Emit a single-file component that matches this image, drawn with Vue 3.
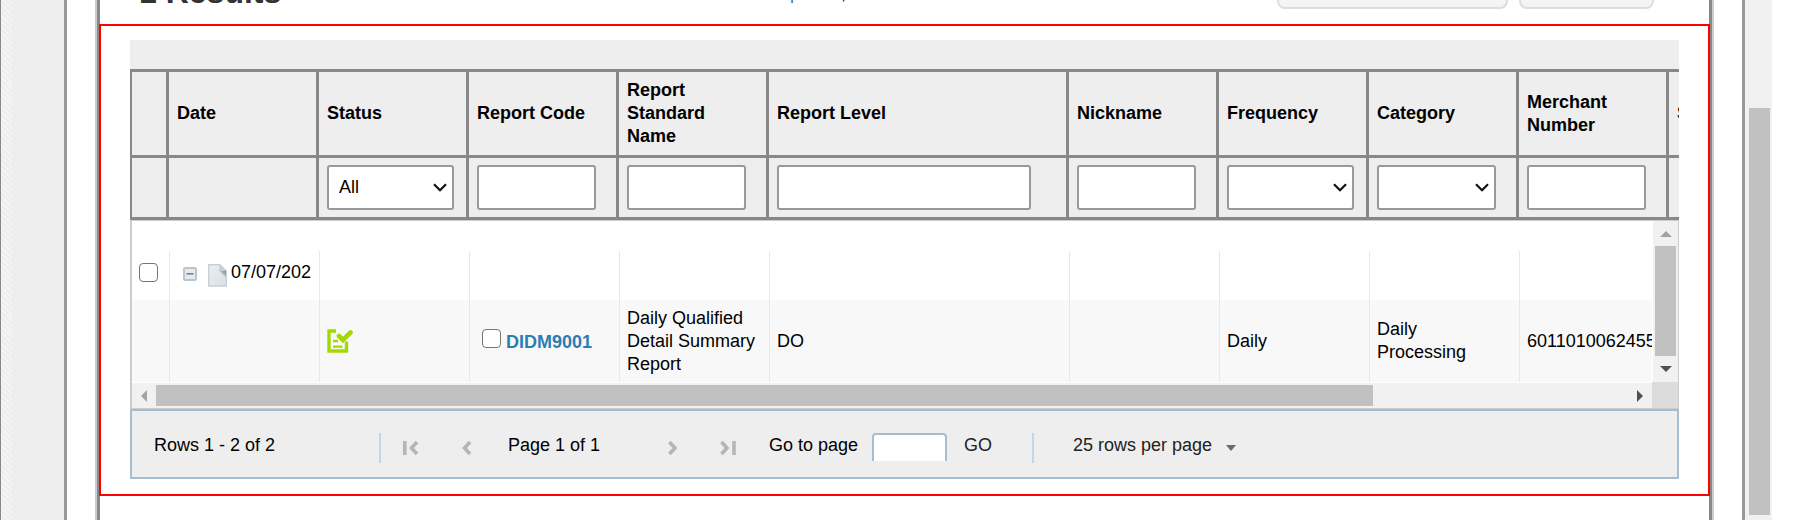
<script setup>
import { ref } from 'vue'

const columns = [
  { key: 'date', label: 'Date', filter: null },
  { key: 'status', label: 'Status', filter: 'select', options: ['All'] },
  { key: 'code', label: 'Report Code', filter: 'text' },
  { key: 'name', label: 'Report Standard Name', filter: 'text' },
  { key: 'level', label: 'Report Level', filter: 'text', wide: true },
  { key: 'nickname', label: 'Nickname', filter: 'text' },
  { key: 'frequency', label: 'Frequency', filter: 'select', options: [''] },
  { key: 'category', label: 'Category', filter: 'select', options: [''], narrow: true },
  { key: 'merchant', label: 'Merchant Number', filter: 'text' },
  { key: 'store', label: 'Store', filter: null },
]
const goTo = ref('')
</script>

<template>
  <div class="page">
    <div class="gutter"></div>
    <div class="outer">
      <main class="frame">
        <header class="top">
          <h1>1 Results</h1>
          <p class="help"><a href="#">Help</a> here,</p>
          <div class="actions">
            <button type="button" class="action wide" aria-label="Download"></button>
            <button type="button" class="action" aria-label="Print"></button>
          </div>
        </header>

        <section class="panel">
          <div class="bar"></div>
          <div class="head">
            <table class="head-table">
              <colgroup>
                <col class="c-pick" />
                <col v-for="c in columns" :key="c.key" :class="c.wide ? 'c-wide' : 'c-std'" />
              </colgroup>
              <thead>
                <tr class="labels">
                  <td></td>
                  <th v-for="c in columns" :key="c.key" scope="col">{{ c.label }}</th>
                </tr>
                <tr class="filters">
                  <td></td>
                  <td v-for="c in columns" :key="c.key">
                    <div v-if="c.filter === 'select'" class="pick" :class="{ narrow: c.narrow }">
                      <select :aria-label="c.label">
                        <option v-for="o in c.options" :key="o">{{ o }}</option>
                      </select>
                      <svg class="chevron" width="14" height="9" viewBox="0 0 14 9" aria-hidden="true">
                        <path d="M1 1.2 L7 7.2 L13 1.2" fill="none" stroke="#111" stroke-width="2.2" />
                      </svg>
                    </div>
                    <input v-else-if="c.filter === 'text'" type="text" :class="{ long: c.wide }" :aria-label="c.label" />
                  </td>
                </tr>
              </thead>
            </table>
          </div>

          <div class="body">
            <div class="viewport">
              <table class="body-table">
                <colgroup>
                  <col class="b-pick" />
                  <col v-for="c in columns" :key="c.key" :class="c.wide ? 'c-wide' : 'c-std'" />
                </colgroup>
                <tbody>
                  <tr class="group">
                    <td class="check"><input type="checkbox" aria-label="Select 07/07/202" /></td>
                    <td>
                      <div class="date">
                        <button type="button" class="toggle" aria-label="Collapse">
                          <svg width="14" height="14" viewBox="0 0 14 14">
                            <rect x="1" y="1" width="12" height="12" rx="1" fill="#e6eaee" stroke="#bcc5cc" stroke-width="2" />
                            <path d="M3.5 6.8 H10.5" stroke="#71838f" stroke-width="1.6" />
                          </svg>
                        </button>
                        <svg class="doc" width="19" height="23" viewBox="0 0 19 23" aria-hidden="true">
                          <defs>
                            <linearGradient id="sheet" x1="0" y1="0" x2="1" y2="1">
                              <stop offset="0" stop-color="#eceff2" />
                              <stop offset="1" stop-color="#d9dfe4" />
                            </linearGradient>
                            <linearGradient id="fold" x1="1" y1="0" x2="0" y2="1">
                              <stop offset=".2" stop-color="#8799a6" />
                              <stop offset=".6" stop-color="#dce2e7" />
                            </linearGradient>
                          </defs>
                          <path d="M.7 .7 H12 L18.3 7 V22 H.7 Z" fill="url(#sheet)" stroke="#c8d0d7" stroke-width="1.4" />
                          <path d="M10 6 H18 V14 Z" fill="url(#fold)" />
                          <path d="M11.5 1 L18 7 H11.5 Z" fill="#c3cdd4" />
                        </svg>
                        <span>07/07/202</span>
                      </div>
                    </td>
                    <td v-for="n in 9" :key="n"></td>
                  </tr>
                  <tr class="item">
                    <td></td>
                    <td></td>
                    <td>
                      <svg class="ready" width="26" height="24" viewBox="0 0 26 24" role="img" aria-label="Ready">
                        <g fill="none" stroke="#a4d900">
                          <path d="M9 2 H2 V22 H19.5 V12.5" stroke-width="3.4" />
                          <path d="M6 12 H11 M6 17.6 H15.5" stroke-width="2.4" />
                          <path d="M12 7 L16 11 L23.5 3.5" stroke-width="4.6" stroke-linecap="round" />
                        </g>
                      </svg>
                    </td>
                    <td class="code">
                      <div>
                        <input type="checkbox" aria-label="DIDM9001" />
                        <a href="#">DIDM9001</a>
                      </div>
                    </td>
                    <td>Daily Qualified Detail Summary Report</td>
                    <td>DO</td>
                    <td></td>
                    <td>Daily</td>
                    <td>Daily Processing</td>
                    <td class="number">601101006245555</td>
                    <td></td>
                  </tr>
                </tbody>
              </table>
            </div>
            <div class="vscroll" aria-hidden="true">
              <svg width="12" height="6" viewBox="0 0 12 6"><path d="M0 6 L6 0 L12 6 Z" fill="#a3a3a3" /></svg>
              <div class="thumb"></div>
              <svg width="12" height="6" viewBox="0 0 12 6"><path d="M0 0 L6 6 L12 0 Z" fill="#505050" /></svg>
            </div>
            <div class="hscroll" aria-hidden="true">
              <svg width="6" height="12" viewBox="0 0 6 12"><path d="M6 0 L0 6 L6 12 Z" fill="#a3a3a3" /></svg>
              <div class="thumb"></div>
              <div></div>
              <svg width="6" height="12" viewBox="0 0 6 12"><path d="M0 0 L6 6 L0 12 Z" fill="#505050" /></svg>
            </div>
            <div class="corner"></div>
          </div>

          <footer class="pager">
            <span>Rows 1 - 2 of 2</span>
            <i class="rule"></i>
            <button type="button" aria-label="First page">
              <svg width="16" height="14" viewBox="0 0 16 14"><path d="M1.8 0 V14 M14 1 L8.5 7 L14 13" /></svg>
            </button>
            <button type="button" aria-label="Previous page">
              <svg width="10" height="14" viewBox="0 0 10 14"><path d="M8 1 L2.5 7 L8 13" /></svg>
            </button>
            <span>Page 1 of 1</span>
            <button type="button" aria-label="Next page">
              <svg width="10" height="14" viewBox="0 0 10 14"><path d="M1.5 1 L7 7 L1.5 13" /></svg>
            </button>
            <button type="button" aria-label="Last page">
              <svg width="16" height="14" viewBox="0 0 16 14"><path d="M14 0 V14 M1.5 1 L7 7 L1.5 13" /></svg>
            </button>
            <label for="goto">Go to page</label>
            <input id="goto" v-model="goTo" type="text" />
            <button type="button" class="go">GO</button>
            <i class="rule"></i>
            <div class="size">
              <select aria-label="Rows per page"><option>25 rows per page</option></select>
              <svg width="10" height="6" viewBox="0 0 10 6" aria-hidden="true"><path d="M0 0 H10 L5 6 Z" fill="#5f6e7a" /></svg>
            </div>
          </footer>
        </section>
      </main>
    </div>
    <div class="page-scroll" aria-hidden="true"><div class="thumb"></div></div>
    <div class="margin"></div>
  </div>
</template>

<style>
body {
  background: #fff;
}
</style>

<style scoped>
* {
  box-sizing: border-box;
}
.page {
  display: flex;
  min-height: 100vh;
  font: 18px/23px "Liberation Sans", Arial, sans-serif;
  color: #000;
}
input,
select,
button {
  font: inherit;
  color: inherit;
  margin: 0;
}
button {
  padding: 0;
  border: 0;
  background: none;
  cursor: pointer;
}
a {
  color: #2a7db5;
  text-decoration: none;
}
svg {
  display: block;
}
.gutter {
  flex: none;
  width: 64px;
  border-left: 1px solid #888;
  background:
    repeating-linear-gradient(45deg, #f4f4f4 0 2px, #eee 2px 4px) 0 0 / 11px 100% no-repeat,
    #eee;
}
.outer {
  flex: 1;
  min-width: 0;
  display: flex;
  padding: 0 30px;
  border: solid #999;
  border-width: 0 3px;
  background: #fff;
}
.frame {
  flex: 1;
  min-width: 0;
  border: solid #888;
  border-width: 0 3px;
  box-shadow: 0 0 0 2px #ccc;
}
.top {
  display: flex;
  align-items: flex-end;
  height: 24px;
  overflow: hidden;
  padding: 0 55px 0 39px;
}
h1 {
  flex: none;
  width: 624px;
  margin: 0 0 16px;
  font-size: 32px;
  line-height: 32px;
  color: #333;
}
.help {
  margin: 0 0 19px;
}
.actions {
  display: flex;
  gap: 11px;
  margin: 0 0 15px auto;
}
.action {
  width: 135px;
  height: 40px;
  border: 2px solid #ddd;
  border-radius: 8px;
  background: linear-gradient(#fff, #f3f3f3);
}
.action.wide {
  width: 231px;
}
.panel {
  margin: 0 -1px;
  padding: 14px 29px 15px;
  border: 2px solid #f00;
  background: #fff;
}
.bar {
  height: 29px;
  background: #eee;
}
.head {
  overflow: hidden;
  border-top: 3px solid #888;
  border-bottom: 1px solid #ccc;
  background: #eee;
}
table {
  table-layout: fixed;
  border-collapse: separate;
  border-spacing: 0;
}
.head-table {
  width: 1689px;
}
.body-table {
  width: 1687px;
  margin-top: 30px;
}
.c-pick {
  width: 39px;
}
.b-pick {
  width: 37px;
}
.c-std {
  width: 150px;
}
.c-wide {
  width: 300px;
}
.head-table th,
.head-table td {
  padding: 0 12px 0 8px;
  border: solid #888;
  border-width: 0 3px 3px 0;
  text-align: left;
}
.head-table tr > :first-child {
  border-left-width: 2px;
}
.labels {
  height: 86px;
}
.filters {
  height: 62px;
}
.filters input {
  display: block;
  width: 119px;
}
.filters input.long {
  width: 254px;
}
.filters input,
.filters select {
  height: 45px;
  padding: 0 10px;
  border: 2px solid #999;
  border-radius: 3px;
  background: #fff;
}
.pick {
  position: relative;
  width: 127px;
}
.pick.narrow {
  width: 119px;
}
.pick select {
  display: block;
  width: 100%;
  appearance: none;
}
.chevron {
  position: absolute;
  right: 7px;
  top: 18px;
  pointer-events: none;
}
.body {
  display: grid;
  grid-template-columns: minmax(0, 1fr) 26px;
  grid-template-rows: auto 26px;
  border: solid #ccc;
  border-width: 0 1px 1px 2px;
}
.viewport {
  overflow: hidden;
}
.body-table td {
  padding: 0 12px 0 7px;
  border-left: 1px solid #e8e8e8;
}
.body-table td:first-child {
  border-left: 0;
}
.group {
  height: 49px;
}
.item {
  height: 82px;
  background: #f8f8f8;
}
input[type="checkbox"] {
  flex: none;
  display: block;
  appearance: none;
  width: 19px;
  height: 19px;
  border: 1px solid #767676;
  border-radius: 4px;
  background: #fff;
}
input[type="checkbox"]:checked {
  background: #2a7db5;
}
.group td {
  padding-bottom: 6px;
}
.date {
  display: flex;
  align-items: center;
  padding-left: 6px;
}
.doc {
  flex: none;
  margin: 6px 4px 0 11px;
}
.toggle {
  margin-top: 2px;
}
.code div {
  display: flex;
  align-items: flex-start;
  gap: 5px;
  padding-left: 5px;
  font-weight: bold;
}
.code a {
  padding-top: 2px;
}
.number {
  white-space: nowrap;
}
.thumb {
  background: #c1c1c1;
}
.vscroll {
  display: grid;
  grid-template-rows: 25px 1fr 26px;
  align-items: center;
  padding: 0 2px 0 2px;
  border-left: 1px solid #fff;
  background: #f1f1f1;
}
.vscroll svg,
.hscroll svg {
  justify-self: center;
}
.vscroll .thumb {
  align-self: stretch;
}
.hscroll {
  display: grid;
  grid-template-columns: 24px 1217fr 255fr 24px;
  align-items: center;
  border-top: 1px solid #fff;
  background: #f1f1f1;
}
.hscroll .thumb {
  height: 21px;
}
.corner {
  background: #dcdcdc;
}
.pager {
  display: grid;
  grid-template-columns: 225px 24px 59px 46px 160px 52px 49px 103px 92px 68px 41px 1fr;
  align-items: start;
  justify-items: start;
  height: 70px;
  padding: 22px 0 0 22px;
  border: 2px solid #a3bdd3;
  background: #eee;
  line-height: 24px;
}
.rule {
  width: 2px;
  height: 30px;
  background: #bdd7ec;
}
.pager button {
  height: 30px;
}
.pager button path {
  fill: none;
  stroke: #b5b5b5;
  stroke-width: 3.6;
}
.pager input {
  width: 75px;
  height: 28px;
  padding: 0 8px;
  border: 2px solid #a3bdd3;
  border-bottom: 0;
  border-radius: 4px 4px 0 0;
  background: #fff;
}
.pager .go {
  height: 24px;
  color: #222;
}
.size {
  display: flex;
  align-items: center;
  gap: 13px;
  color: #222;
}
.size select {
  height: 24px;
  padding: 0;
  border: 0;
  background: none;
  appearance: none;
  line-height: 24px;
}
.size svg {
  margin-top: 6px;
}
.page-scroll {
  flex: none;
  display: flex;
  width: 27px;
  padding: 108px 2px 5px 4px;
  background: #f1f1f1;
}
.page-scroll .thumb {
  flex: 1;
}
.margin {
  flex: none;
  width: 37px;
}
</style>
